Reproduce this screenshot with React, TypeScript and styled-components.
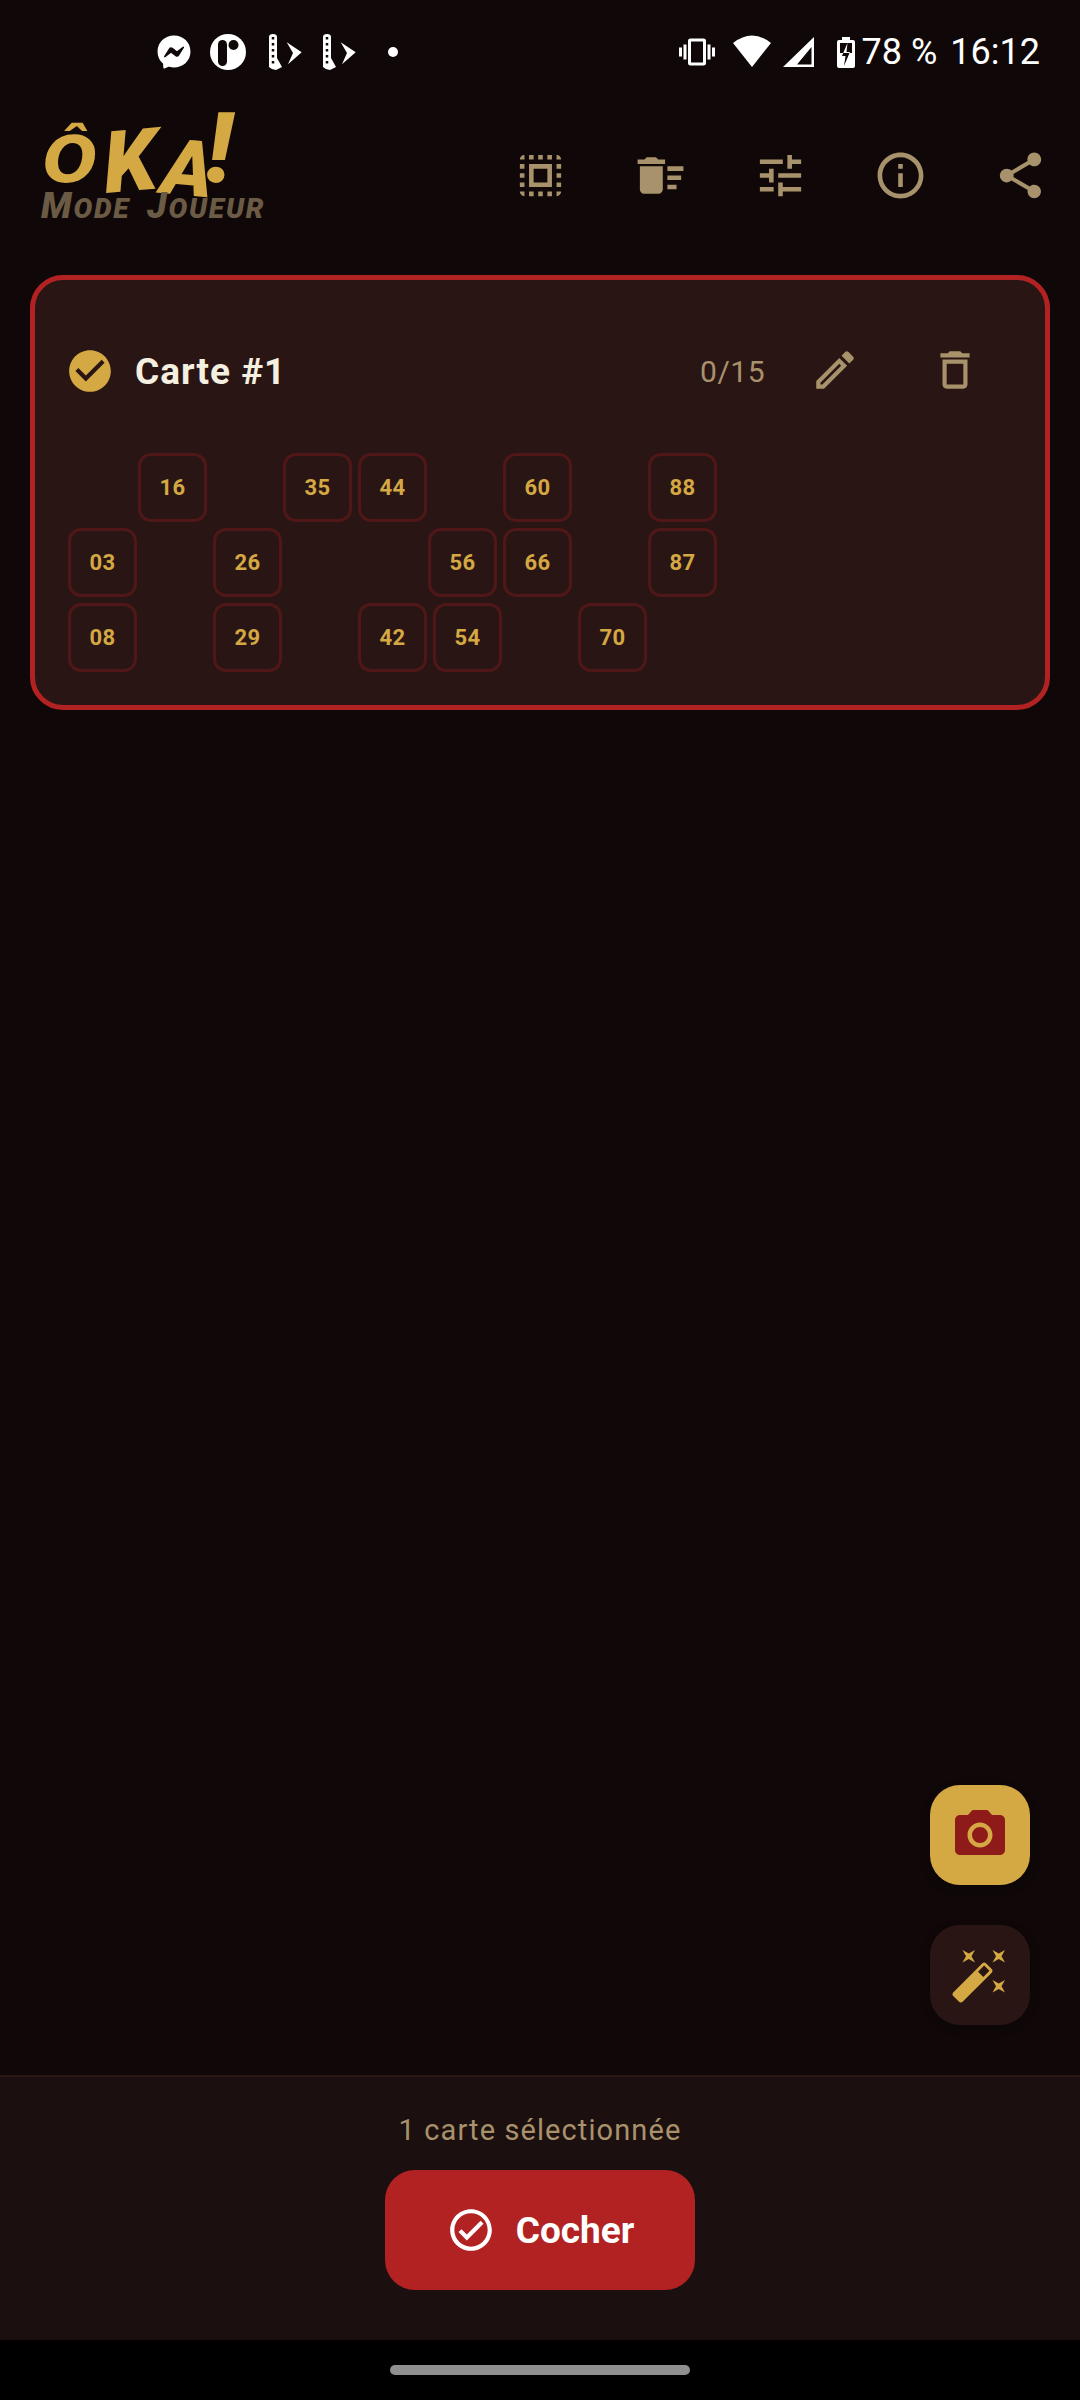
import React from 'react';
import styled, { createGlobalStyle } from 'styled-components';
import { FaFacebookMessenger } from 'react-icons/fa';

const GOLD = '#d4a843';
const MUTED = '#a8926b';

const GlobalStyle = createGlobalStyle`
  html, body {
    margin: 0;
    padding: 0;
    background: #100808;
    font-family: Roboto, "Liberation Sans", sans-serif;
  }
`;

const Page = styled.div`
  width: 1080px;
  height: 2400px;
  display: flex;
  flex-direction: column;
  background: #100808;
  overflow: hidden;
`;

const StatusBar = styled.div`
  height: 104px;
  flex: none;
  display: flex;
  align-items: center;
  padding: 0 40px 0 157px;
  color: #fff;
  box-sizing: border-box;
`;

const StatusLeft = styled.div`
  display: flex;
  align-items: center;
  flex: 1;
`;

const StatusRight = styled.div`
  display: flex;
  align-items: center;
`;

const StatusText = styled.span<{ $left: number }>`
  font-size: 36px;
  line-height: 40px;
  margin-left: ${(props) => props.$left}px;
`;

const Toolbar = styled.header`
  height: 142px;
  flex: none;
  display: flex;
  align-items: center;
  justify-content: space-between;
  padding: 0 32px 0 30px;
  box-sizing: border-box;
`;

const LogoSvg = styled.svg`
  width: 250px;
  height: 150px;
  display: block;
  margin-top: -7px;
  overflow: visible;
`;

const ToolIcons = styled.div`
  display: flex;
  gap: 65px;
`;

const Icon = styled.svg<{ $size: number; $color: string }>`
  width: ${(props) => props.$size}px;
  height: ${(props) => props.$size}px;
  fill: ${(props) => props.$color};
  display: block;
  flex: none;
`;

const Main = styled.main`
  flex: 1;
  position: relative;
  padding: 29px 30px 0;
`;

const Card = styled.section`
  height: 435px;
  box-sizing: border-box;
  border: 5px solid #b22222;
  border-radius: 33px;
  background: #2a1515;
  padding: 33px;
`;

const CardHeader = styled.div`
  display: flex;
  align-items: center;
  height: 116px;
  margin: 0 -3px 24px -3px;
`;

const CardTitle = styled.h2`
  margin: 0 0 0 20px;
  flex: 1;
  font-size: 37px;
  font-weight: 700;
  letter-spacing: 1px;
  color: #f5efe0;
`;

const Progress = styled.span`
  font-size: 30px;
  letter-spacing: 0.5px;
  color: ${MUTED};
  margin-right: 10px;
`;

const IconSlot = styled.div`
  width: 120px;
  display: flex;
  justify-content: center;
  margin-bottom: 2px;
`;

const Grid = styled.div`
  display: flex;
  flex-direction: column;
  gap: 6px;
`;

const GridRow = styled.div`
  display: flex;
  gap: 6px;
`;

const Blank = styled.div`
  width: 64px;
  flex: none;
`;

const Chip = styled.div`
  width: 69px;
  height: 69px;
  flex: none;
  box-sizing: border-box;
  border: 3px solid #4f1717;
  border-radius: 13px;
  display: flex;
  align-items: center;
  justify-content: center;
  font-size: 22px;
  font-weight: 700;
  letter-spacing: 0.3px;
  color: ${GOLD};
`;

const FabStack = styled.div`
  position: absolute;
  right: 50px;
  bottom: 50px;
  display: flex;
  flex-direction: column;
  gap: 40px;
`;

const Fab = styled.div<{ $bg: string }>`
  width: 100px;
  height: 100px;
  border-radius: 30px;
  background: ${(props) => props.$bg};
  display: flex;
  align-items: center;
  justify-content: center;
  box-shadow: 0 3px 10px rgba(0, 0, 0, 0.25);
`;

const BottomPanel = styled.footer`
  height: 265px;
  flex: none;
  box-sizing: border-box;
  border-top: 2px solid #2a1515;
  background: #1c0f0f;
  display: flex;
  flex-direction: column;
  align-items: center;
  padding-top: 36px;
`;

const Selected = styled.div`
  font-size: 29px;
  line-height: 34px;
  letter-spacing: 1.1px;
  color: ${MUTED};
  margin-bottom: 23px;
`;

const CheckButton = styled.button`
  width: 310px;
  height: 120px;
  border: 0;
  border-radius: 30px;
  background: #b22222;
  color: #fff;
  display: flex;
  align-items: center;
  justify-content: center;
  gap: 20px;
  font-family: inherit;
  font-size: 37px;
  font-weight: 700;
  padding: 0;
`;

const NavBar = styled.div`
  height: 60px;
  flex: none;
  background: #000;
  display: flex;
  justify-content: center;
  padding-top: 25px;
  box-sizing: border-box;
`;

const NavHandle = styled.div`
  width: 300px;
  height: 10px;
  border-radius: 5px;
  background: #8f8f8f;
`;

const Dot = styled.div`
  width: 10px;
  height: 10px;
  border-radius: 50%;
  background: #fff;
  margin-left: 30px;
`;

const NotifIcon = styled.svg<{ $width: number; $left: number }>`
  width: ${(props) => props.$width}px;
  height: 40px;
  display: block;
  flex: none;
  margin-left: ${(props) => props.$left}px;
`;

const rows: (string | null)[][] = [
  [null, '16', null, '35', '44', null, '60', null, '88'],
  ['03', null, '26', null, null, '56', '66', null, '87'],
  ['08', null, '29', null, '42', '54', null, '70'],
];

const paths = {
  selectAll:
    'M3 5h2V3c-1.1 0-2 .9-2 2zm0 8h2v-2H3v2zm4 8h2v-2H7v2zM3 9h2V7H3v2zm10-6h-2v2h2V3zm6 0v2h2c0-1.1-.9-2-2-2zM5 21v-2H3c0 1.1.9 2 2 2zm-2-4h2v-2H3v2zM9 3H7v2h2V3zm2 18h2v-2h-2v2zm8-8h2v-2h-2v2zm0 8c1.1 0 2-.9 2-2h-2v2zm0-12h2V7h-2v2zm0 8h2v-2h-2v2zm-4 4h2v-2h-2v2zm0-16h2V3h-2v2zM7 17h10V7H7v10zm2-8h6v6H9V9z',
  deleteSweep:
    'M15 16h4v2h-4zm0-8h7v2h-7zm0 4h6v2h-6zM3 18c0 1.1.9 2 2 2h6c1.1 0 2-.9 2-2V8H3v10zM14 5h-3l-1-1H6L5 5H2v2h12z',
  tune: 'M3 17v2h6v-2H3zM3 5v2h10V5H3zm10 16v-2h8v-2h-8v-2h-2v6h2zM7 9v2H3v2h4v2h2V9H7zm14 4v-2H11v2h10zm-6-4h2V7h4V5h-4V3h-2v6z',
  info: 'M11 7h2v2h-2zm0 4h2v6h-2zm1-9C6.48 2 2 6.48 2 12s4.48 10 10 10 10-4.48 10-10S17.52 2 12 2zm0 18c-4.41 0-8-3.59-8-8s3.59-8 8-8 8 3.59 8 8-3.59 8-8 8z',
  share:
    'M18 16.08c-.76 0-1.44.3-1.96.77L8.91 12.7c.05-.23.09-.46.09-.7s-.04-.47-.09-.7l7.05-4.11c.54.5 1.25.81 2.04.81 1.66 0 3-1.34 3-3s-1.34-3-3-3-3 1.34-3 3c0 .24.04.47.09.7L8.04 9.81C7.5 9.31 6.79 9 6 9c-1.66 0-3 1.34-3 3s1.34 3 3 3c.79 0 1.5-.31 2.04-.81l7.12 4.16c-.05.21-.08.43-.08.65 0 1.61 1.31 2.92 2.92 2.92s2.92-1.31 2.92-2.92-1.31-2.92-2.92-2.92z',
  edit: 'M14.06 9.02l.92.92L5.92 19H5v-.92l9.06-9.06M17.66 3c-.25 0-.51.1-.7.29l-1.83 1.83 3.75 3.75 1.83-1.83c.39-.39.39-1.02 0-1.41l-2.34-2.34c-.2-.2-.45-.29-.71-.29zm-3.6 3.19L3 17.25V21h3.75L17.81 9.94l-3.75-3.75z',
  trash: 'M6 19c0 1.1.9 2 2 2h8c1.1 0 2-.9 2-2V7H6v12zM8 9h8v10H8V9zm7.5-5l-1-1h-5l-1 1H5v2h14V4z',
  checkCircle:
    'M12 2C6.48 2 2 6.48 2 12s4.48 10 10 10 10-4.48 10-10S17.52 2 12 2zm-2 15l-5-5 1.41-1.41L10 14.17l7.59-7.59L19 8l-9 9z',
  checkOutline:
    'M12 2C6.48 2 2 6.48 2 12s4.48 10 10 10 10-4.48 10-10S17.52 2 12 2zm0 18c-4.41 0-8-3.59-8-8s3.59-8 8-8 8 3.59 8 8-3.59 8-8 8zm4.59-12.42L10 14.17l-2.59-2.58L6 13l4 4 8-8z',
  camera:
    'M9 2L7.17 4H4c-1.1 0-2 .9-2 2v12c0 1.1.9 2 2 2h16c1.1 0 2-.9 2-2V6c0-1.1-.9-2-2-2h-3.17L15 2H9zm3 15c-2.76 0-5-2.24-5-5s2.24-5 5-5 5 2.24 5 5-2.24 5-5 5zM12 8.8a3.2 3.2 0 1 0 0 6.4 3.2 3.2 0 0 0 0-6.4z',
  wand: 'M7.5 5.6L10 7 8.6 4.5 10 2 7.5 3.4 5 2l1.4 2.5L5 7zm12 9.8L17 14l1.4 2.5L17 19l2.5-1.4L22 19l-1.4-2.5L22 14zM22 2l-2.5 1.4L17 2l1.4 2.5L17 7l2.5-1.4L22 7l-1.4-2.5zm-7.63 5.29c-.39-.39-1.02-.39-1.41 0L1.29 18.96c-.39.39-.39 1.02 0 1.41l2.34 2.34c.39.39 1.02.39 1.41 0L16.7 11.05c.39-.39.39-1.02 0-1.41l-2.33-2.35zm-1.03 5.49l-2.12-2.12 2.44-2.44 2.12 2.12-2.44 2.44z',
  vibration:
    'M0 15h2V9H0v6zm3 2h2V7H3v10zm19-8v6h2V9h-2zm-3 8h2V7h-2v10zM16.5 3h-9C6.67 3 6 3.67 6 4.5v15c0 .83.67 1.5 1.5 1.5h9c.83 0 1.5-.67 1.5-1.5v-15c0-.83-.67-1.5-1.5-1.5zM16 19H8V5h8v14z',
};

const MaterialIcon: React.FC<{ d: string; size: number; color: string }> = ({ d, size, color }) => (
  <Icon viewBox="0 0 24 24" $size={size} $color={color}>
    <path d={d} fill={color} fillRule="evenodd" />
  </Icon>
);

const Logo = () => (
  <LogoSvg viewBox="0 -10 250 150">
    <text fontFamily="Roboto, sans-serif" fontWeight="900" fontStyle="italic" fill={GOLD}>
      <tspan x="13" y="75" fontFamily="'DejaVu Sans', sans-serif" fontWeight="700" fontSize="64">
        Ô
      </tspan>
      <tspan x="76" y="86" rotate="-5" fontSize="86">
        K
      </tspan>
      <tspan x="130" y="86" rotate="5" fontSize="78">
        A
      </tspan>
      <tspan x="176" y="75" fontSize="98">
        !
      </tspan>
    </text>
    <text
      x="11"
      y="111"
      fontFamily="Roboto, sans-serif"
      fontWeight="900"
      fontStyle="italic"
      fontSize="28"
      letterSpacing="1.8"
      wordSpacing="8"
      fill="#6b5b45"
    >
      <tspan fontSize="36">M</tspan>ODE <tspan fontSize="36">J</tspan>OUEUR
    </text>
  </LogoSvg>
);

const RibbonIcon: React.FC<{ left: number }> = ({ left }) => (
  <NotifIcon viewBox="0 0 36 40" $width={36} $left={left}>
    <path d="M1 5q0-3 4-3t4 3v21l5 9-6 3q-4 0-7-3z" fill="#fff" />
    <path d="M5 5v30" stroke="#100808" strokeWidth="2.5" strokeDasharray="2.5 3.5" />
    <path d="M18.700 10.300l15 10-13.700 12 5-11.300z" fill="#fff" />
  </NotifIcon>
);

export default function App() {
  return (
    <Page>
      <GlobalStyle />
      <StatusBar>
        <StatusLeft>
          <FaFacebookMessenger size={34} color="#fff" />
          <NotifIcon viewBox="0 0 36 40" $width={36} $left={19}>
            <circle cx="18" cy="20" r="18" fill="#fff" />
            <rect x="8" y="8" width="9" height="26" rx="4.5" fill="#100808" />
            <circle cx="23.500" cy="13" r="5" fill="#100808" />
          </NotifIcon>
          <RibbonIcon left={22} />
          <RibbonIcon left={18} />
          <Dot />
        </StatusLeft>
        <StatusRight>
          <MaterialIcon d={paths.vibration} size={36} color="#fff" />
          <NotifIcon viewBox="0 0 38 40" $width={38} $left={18}>
            <path d="M0 11Q19-4 38 11L19 35z" fill="#fff" />
          </NotifIcon>
          <NotifIcon viewBox="0 0 32 40" $width={32} $left={12}>
            <path d="M31 5v30H0zM28.500 15L14 32.500h14.500z" fill="#fff" fillRule="evenodd" />
          </NotifIcon>
          <NotifIcon viewBox="0 0 18 40" $width={18} $left={22}>
            <path
              d="M5 5h8v3h3q2 0 2 2v24q0 2-2 2H2q-2 0-2-2V10q0-2 2-2h3zM3 11v10h12V11z"
              fill="#fff"
              fillRule="evenodd"
            />
            <path d="M10.500 11L6.200 21h6.300l.5-1H9.500z" fill="#fff" />
            <path d="M6.200 21L5 24h3.500L7 34l5.500-13z" fill="#100808" />
          </NotifIcon>
          <StatusText $left={7}>78 %</StatusText>
          <StatusText $left={13}>16:12</StatusText>
        </StatusRight>
      </StatusBar>

      <Toolbar>
        <Logo />
        <ToolIcons>
          <MaterialIcon d={paths.selectAll} size={55} color={MUTED} />
          <MaterialIcon d={paths.deleteSweep} size={55} color={MUTED} />
          <MaterialIcon d={paths.tune} size={55} color={MUTED} />
          <MaterialIcon d={paths.info} size={55} color={MUTED} />
          <MaterialIcon d={paths.share} size={55} color={MUTED} />
        </ToolIcons>
      </Toolbar>

      <Main>
        <Card>
          <CardHeader>
            <MaterialIcon d={paths.checkCircle} size={50} color={GOLD} />
            <CardTitle>Carte #1</CardTitle>
            <Progress>0/15</Progress>
            <IconSlot>
              <MaterialIcon d={paths.edit} size={50} color={MUTED} />
            </IconSlot>
            <IconSlot>
              <MaterialIcon d={paths.trash} size={50} color={MUTED} />
            </IconSlot>
          </CardHeader>
          <Grid>
            {rows.map((row, rowIndex) => (
              <GridRow key={rowIndex}>
                {row.map((value, index) =>
                  value ? <Chip key={index}>{value}</Chip> : <Blank key={index} />,
                )}
              </GridRow>
            ))}
          </Grid>
        </Card>

        <FabStack>
          <Fab $bg={GOLD}>
            <MaterialIcon d={paths.camera} size={60} color="#8f1a1a" />
          </Fab>
          <Fab $bg="#2a1515">
            <MaterialIcon d={paths.wand} size={60} color={GOLD} />
          </Fab>
        </FabStack>
      </Main>

      <BottomPanel>
        <Selected>1 carte sélectionnée</Selected>
        <CheckButton>
          <MaterialIcon d={paths.checkOutline} size={50} color="#fff" />
          Cocher
        </CheckButton>
      </BottomPanel>

      <NavBar>
        <NavHandle />
      </NavBar>
    </Page>
  );
}
